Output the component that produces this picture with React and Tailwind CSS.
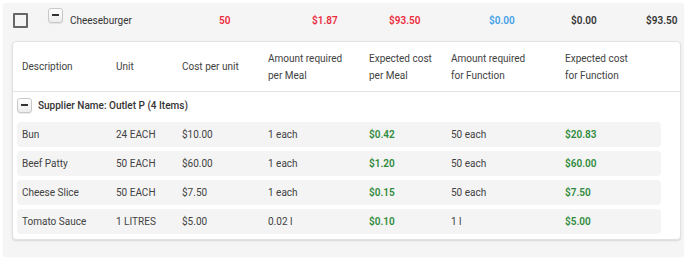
import React from "react";

const rows = [
  ["Bun", "24 EACH", "$10.00", "1 each", "$0.42", "50 each", "$20.83"],
  ["Beef Patty", "50 EACH", "$60.00", "1 each", "$1.20", "50 each", "$60.00"],
  ["Cheese Slice", "50 EACH", "$7.50", "1 each", "$0.15", "50 each", "$7.50"],
  ["Tomato Sauce", "1 LITRES", "$5.00", "0.02 l", "$0.10", "1 l", "$5.00"],
];

function MinusBox({ className = "" }) {
  return (
    <div
      className={
        "flex items-center justify-center rounded-[3px] border border-[#c8c8c8] bg-gradient-to-b from-white to-[#ececec] shadow-[0_1px_1px_rgba(0,0,0,0.08)] " +
        className
      }
    >
      <div className="h-[2px] w-[7px] bg-[#333]" />
    </div>
  );
}

export default function App() {
  return (
    <div className="min-h-[261px] w-[688px] bg-white pt-[3px] pl-[3px] font-['Roboto',sans-serif] text-[10px] text-[#424242]">
      <div className="w-[681px] rounded-[4px] bg-[#f5f5f5] pb-[17px] pl-[9px] pr-[3px] shadow-[0_0_1px_rgba(0,0,0,0.08)]">
        {/* Top summary row */}
        <div className="flex h-[34px] items-center font-semibold">
          <div className="ml-[1px] h-[15px] w-[15px] rounded-[1px] border-2 border-[#666]" />
          <MinusBox className="ml-[20px] mb-[10px] h-[15px] w-[15px]" />
          <div className="ml-[7px] w-[149px] font-normal text-[#333]">Cheeseburger</div>
          <div className="w-[93px] text-[#ec2a3b]">50</div>
          <div className="w-[77px] text-[#ec2a3b]">$1.87</div>
          <div className="w-[100px] text-[#ec2a3b]">$93.50</div>
          <div className="w-[82px] text-[#42a0e6]">$0.00</div>
          <div className="w-[75px] text-[#333]">$0.00</div>
          <div className="text-[#333]">$93.50</div>
        </div>

        {/* Inner card */}
        <div className="mt-[4px] rounded-[4px] border border-[#e2e2e2] bg-white pb-[5px] shadow-[0_1px_2px_rgba(0,0,0,0.12)]">
          <div className="flex h-[50px] items-center border-b border-[#e2e2e2] pl-[9px] leading-[17px] text-[#424242]">
            <div className="w-[94px]">Description</div>
            <div className="w-[66px]">Unit</div>
            <div className="w-[86px]">Cost per unit</div>
            <div className="w-[101px]">Amount required<br />per Meal</div>
            <div className="w-[82px]">Expected cost<br />per Meal</div>
            <div className="w-[114px]">Amount required<br />for Function</div>
            <div>Expected cost<br />for Function</div>
          </div>

          <div className="flex h-[26px] items-center pl-[4px] font-medium text-[#333]">
            <MinusBox className="h-[15px] w-[15px]" />
            <span className="ml-[6px]">Supplier Name: Outlet P (4 Items)</span>
          </div>

          <div className="mt-[4px] flex w-[648px] flex-col gap-[4px] pl-[4px]">
            {rows.map((r) => (
              <div
                key={r[0]}
                className="flex h-[25px] w-[644px] items-center rounded-[4px] bg-[#f4f4f4] pl-[5px] text-[#424242]"
              >
                <div className="w-[94px]">{r[0]}</div>
                <div className="w-[66px]">{r[1]}</div>
                <div className="w-[86px]">{r[2]}</div>
                <div className="w-[101px]">{r[3]}</div>
                <div className="w-[82px] font-semibold text-[#2f8a3b]">{r[4]}</div>
                <div className="w-[114px]">{r[5]}</div>
                <div className="font-semibold text-[#2f8a3b]">{r[6]}</div>
              </div>
            ))}
          </div>
        </div>
      </div>
    </div>
  );
}
